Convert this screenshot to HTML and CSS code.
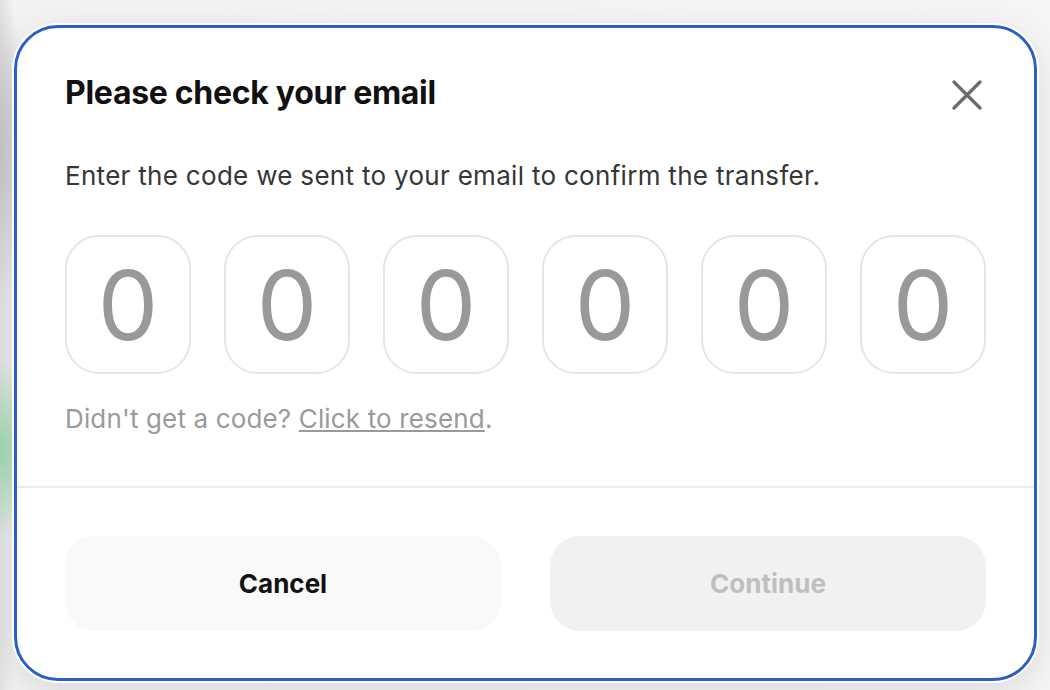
FILE: index.html
```html
<!DOCTYPE html>
<html lang="en">
<head>
    <meta charset="UTF-8">
    <meta name="viewport" content="width=device-width, initial-scale=1.0">
    <title>Check your email</title>
    <link rel="stylesheet" href="styles.css">
</head>
<body>
    <div class="modal">
        <div class="modal-body">
            <div class="modal-header">
                <h1>Please check your email</h1>
                <button class="close-btn" aria-label="Close">
                    <svg width="30" height="30" viewBox="0 0 30 30" fill="none" stroke="#6b6b6b" stroke-width="3.2" stroke-linecap="round">
                        <path d="M2 2 L28 28 M28 2 L2 28"/>
                    </svg>
                </button>
            </div>
            <p class="intro">Enter the code we sent to your email to confirm the transfer.</p>
            <div class="code-inputs">
                <input type="text" maxlength="1" placeholder="0">
                <input type="text" maxlength="1" placeholder="0">
                <input type="text" maxlength="1" placeholder="0">
                <input type="text" maxlength="1" placeholder="0">
                <input type="text" maxlength="1" placeholder="0">
                <input type="text" maxlength="1" placeholder="0">
            </div>
            <p class="resend">Didn't get a code? <a href="#">Click to resend</a>.</p>
        </div>
        <div class="modal-footer">
            <button class="btn btn-cancel">Cancel</button>
            <button class="btn btn-continue" disabled>Continue</button>
        </div>
    </div>
</body>
</html>
```

FILE: styles.css
```css
body {
    margin: 0;
    padding: 25px 13px 0 14px;
    height: 690px;
    box-sizing: border-box;
    overflow: hidden;
    font-family: Inter, "Liberation Sans", sans-serif;
    background:
        radial-gradient(ellipse 40px 90px at 0 450px, rgba(150, 215, 170, 0.9), transparent),
        radial-gradient(ellipse 30px 160px at 0 150px, rgba(190, 190, 190, 0.8), transparent),
        linear-gradient(to right, #e2e2e2 0, #f3f3f3 14px, #f6f6f6 100%);
}
.modal {
    background: #fff;
    border: 3px solid #2a5fc6;
    border-radius: 44px;
    box-shadow: 0 0 0 2px #fff, 0 10px 40px rgba(0, 0, 0, 0.12);
}
.modal-body {
    padding: 45px 48px 52px;
}
.modal-header {
    display: flex;
    justify-content: space-between;
    align-items: flex-start;
}
.modal-header h1 {
    margin: 0;
    font-size: 32px;
    line-height: 40px;
    font-weight: 700;
    color: #111;
    letter-spacing: -0.3px;
}
.close-btn {
    background: none;
    border: 0;
    padding: 0;
    margin: 7px 4px 0 0;
    width: 30px;
    height: 30px;
    cursor: pointer;
}
.close-btn svg {
    display: block;
}
.intro {
    margin: 47px 0 0;
    font-size: 26px;
    line-height: 32px;
    letter-spacing: 0.3px;
    color: #363636;
}
.code-inputs {
    display: flex;
    gap: 33px;
    margin-top: 43px;
}
.code-inputs input {
    flex: 1;
    min-width: 0;
    height: 139px;
    box-sizing: border-box;
    padding: 0;
    border: 2px solid #e6e6e6;
    border-radius: 34px;
    background: #fff;
    text-align: center;
    font-family: inherit;
    font-size: 96px;
    color: #333;
    outline: none;
}
.code-inputs input::placeholder {
    color: #999;
}
.resend {
    margin: 29px 0 0;
    font-size: 26px;
    line-height: 32px;
    letter-spacing: 0.15px;
    color: #9a9a9a;
}
.resend a {
    color: inherit;
    text-decoration: underline;
}
.modal-footer {
    display: flex;
    gap: 49px;
    padding: 48px 48px 47px;
    border-top: 2px solid #ebebeb;
    margin-top: -1px;
}
.btn {
    flex: 1;
    height: 95px;
    border: 0;
    border-radius: 30px;
    font-family: inherit;
    font-size: 26px;
    font-weight: 700;
    cursor: pointer;
}
.btn-cancel {
    background: #f9f9f9;
    color: #111;
}
.btn-continue {
    background: #f1f1f1;
    color: #bfbfbf;
    cursor: default;
}
```
